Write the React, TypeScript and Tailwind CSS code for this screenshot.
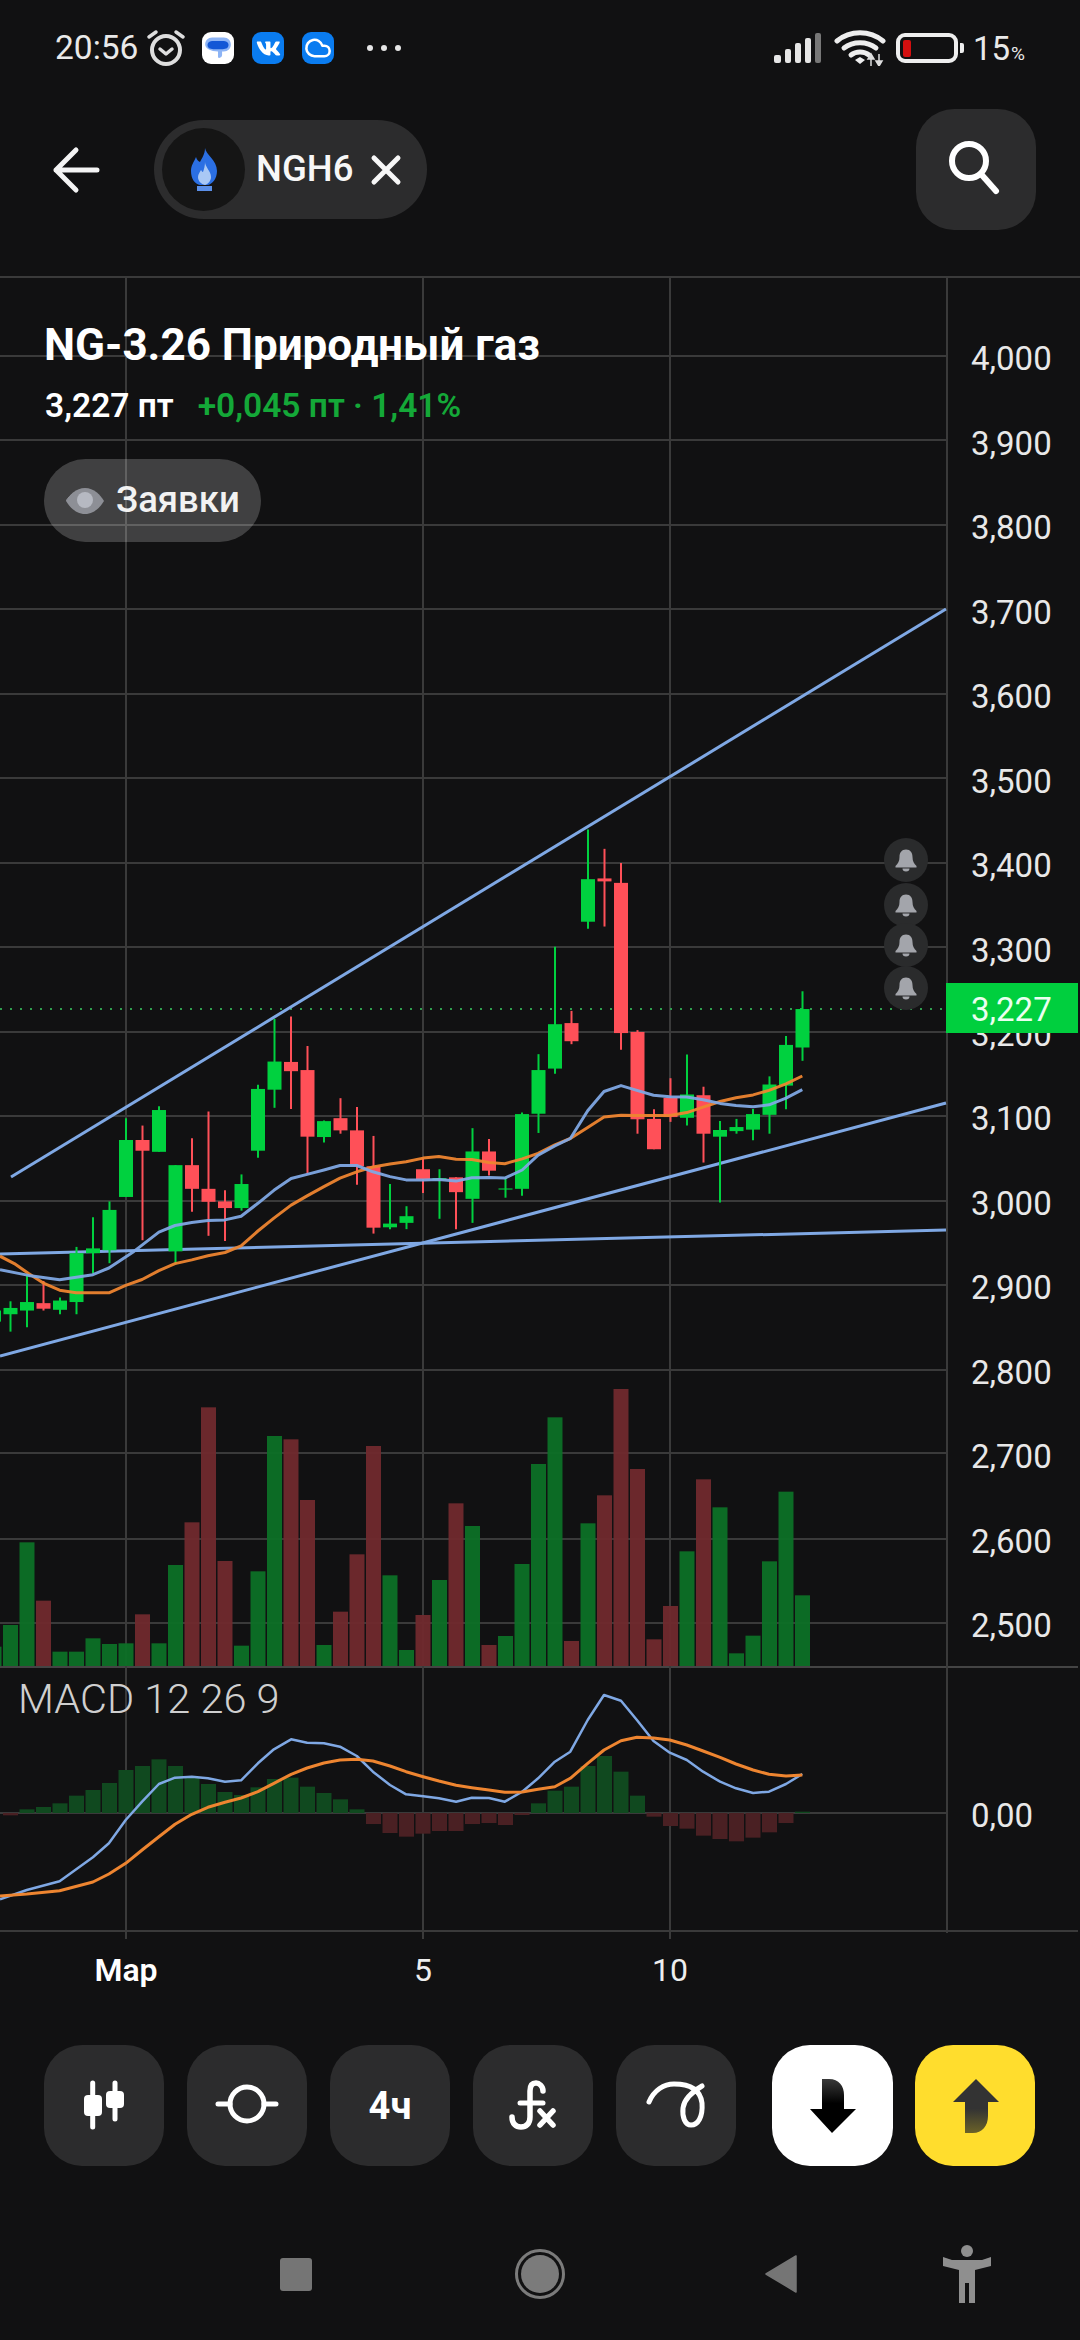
import React from "react";
import { FaVk } from "react-icons/fa";
import { Cloud } from "lucide-react";

type Candle = [number, number, number, number, "g" | "r"];
const GREEN = "#00d13f";
const RED = "#ff5058";
const LINE = "#7fa8e4";
const ORANGE = "#ee8530";
const GRID = "#3a3a3a";

const cy = (z: number) => 800 + z / 2.703;
const xAt = (i: number) => 126 + 16.5 * (i - 8);

const candles: Candle[] = [
  [1360, 1420, 1380, 1410, "g"],
  [1355, 1437, 1373, 1390, "g"],
  [1285, 1425, 1357, 1380, "g"],
  [1300, 1380, 1360, 1375, "r"],
  [1345, 1390, 1353, 1378, "g"],
  [1208, 1390, 1225, 1357, "g"],
  [1128, 1280, 1212, 1225, "g"],
  [1085, 1252, 1108, 1217, "g"],
  [860, 1073, 919, 1073, "g"],
  [880, 1190, 919, 948, "r"],
  [828, 951, 838, 951, "g"],
  [987, 1255, 987, 1220, "g"],
  [914, 1113, 987, 1051, "r"],
  [842, 1178, 1051, 1086, "r"],
  [1055, 1192, 1085, 1103, "r"],
  [1012, 1110, 1038, 1103, "g"],
  [770, 967, 781, 948, "g"],
  [592, 832, 707, 783, "g"],
  [585, 835, 708, 733, "r"],
  [665, 1010, 730, 910, "r"],
  [866, 926, 868, 911, "g"],
  [806, 902, 860, 893, "r"],
  [830, 1040, 893, 990, "r"],
  [908, 1172, 990, 1156, "r"],
  [1038, 1160, 1145, 1155, "g"],
  [1098, 1160, 1125, 1143, "g"],
  [968, 1062, 998, 1025, "r"],
  [998, 1132, 1022, 1027, "g"],
  [1020, 1160, 1020, 1060, "r"],
  [887, 1143, 950, 1078, "g"],
  [916, 1015, 950, 1002, "r"],
  [1022, 1075, 1050, 1053, "g"],
  [845, 1070, 849, 1051, "g"],
  [687, 900, 730, 848, "g"],
  [397, 740, 606, 726, "g"],
  [570, 660, 603, 652, "r"],
  [80, 348, 214, 329, "g"],
  [132, 342, 212, 220, "r"],
  [170, 675, 224, 630, "r"],
  [622, 902, 627, 863, "r"],
  [836, 944, 862, 944, "r"],
  [752, 870, 805, 857, "r"],
  [688, 880, 796, 859, "g"],
  [775, 980, 798, 902, "r"],
  [868, 1088, 892, 910, "g"],
  [862, 902, 884, 895, "g"],
  [835, 920, 849, 891, "g"],
  [747, 902, 769, 851, "g"],
  [638, 836, 662, 772, "g"],
  [517, 705, 565, 669, "g"],
];

const volumes: [number, "g" | "r"][] = [
  [800, "g"], [735, "g"], [487, "g"], [662, "r"], [815, "g"], [815, "g"], [775, "g"], [792, "g"], [790, "g"], [703, "r"],
  [790, "g"], [555, "g"], [427, "r"], [82, "r"], [543, "r"], [797, "g"], [574, "g"], [168, "g"], [178, "r"], [360, "r"],
  [795, "g"], [695, "r"], [523, "r"], [198, "r"], [586, "g"], [810, "g"], [705, "r"], [600, "g"], [370, "r"], [438, "g"],
  [795, "r"], [768, "g"], [552, "g"], [252, "g"], [112, "g"], [783, "r"], [430, "g"], [346, "r"], [27, "r"], [267, "r"],
  [778, "r"], [678, "r"], [514, "g"], [298, "r"], [382, "g"], [820, "g"], [767, "g"], [544, "g"], [335, "g"], [646, "g"],
];

const hist: [number, "g" | "r"][] = [
  [436, "r"], [418, "g"], [411, "g"], [400, "g"], [377, "g"], [360, "g"], [339, "g"], [300, "g"], [288, "g"], [268, "g"],
  [288, "g"], [322, "g"], [342, "g"], [366, "g"], [375, "g"], [352, "g"], [327, "g"], [323, "g"], [350, "g"], [369, "g"],
  [388, "g"], [418, "g"], [462, "r"], [489, "r"], [500, "r"], [491, "r"], [483, "r"], [483, "r"], [462, "r"], [459, "r"],
  [465, "r"], [435, "r"], [400, "g"], [362, "g"], [350, "g"], [288, "g"], [258, "g"], [305, "g"], [377, "g"], [440, "r"],
  [468, "r"], [476, "r"], [497, "r"], [507, "r"], [514, "r"], [503, "r"], [487, "r"], [459, "r"], [425, "g"],
];

const left = (a: number[][], fy: (y: number) => number) => a.map(([x, y]) => `${(x / 2.8).toFixed(1)},${fy(y).toFixed(1)}`);
const right = (a: number[][], fy: (y: number) => number) => a.map(([x, y]) => `${(500 + x / 2.703).toFixed(1)},${fy(y).toFixed(1)}`);
const my = (z: number) => 1670 + z / 3;

const maBlue = [
  ...left([[0,1270],[80,1285],[167,1297],[260,1283],[305,1265],[375,1220],[445,1168],[490,1150],[537,1142],[582,1137],[630,1135],[675,1125],[722,1090],[767,1055],[815,1023],[860,1012],[907,1000],[952,988],[999,988],[1044,1005],[1092,1018],[1137,1027],[1185,1027],[1229,1026],[1277,1030],[1321,1021],[1369,1020]], cy),
  ...right([[13,1022],[60,1000],[103,960],[148,935],[190,915],[237,840],[281,788],[327,772],[370,785],[415,798],[459,802],[505,803],[549,810],[595,820],[638,826],[684,829],[727,824],[773,806],[817,783]], cy),
].join(" ");
const maOrange = [
  ...left([[0,1233],[40,1253],[80,1280],[120,1305],[167,1325],[213,1332],[260,1332],[305,1332],[352,1312],[398,1296],[445,1272],[490,1253],[537,1243],[582,1232],[630,1223],[675,1205],[722,1165],[767,1130],[815,1095],[860,1070],[907,1045],[952,1022],[999,1005],[1044,992],[1092,984],[1137,978],[1185,968],[1229,964],[1277,971],[1321,972],[1369,980]], cy),
  ...right([[13,983],[60,970],[103,955],[148,932],[190,915],[237,885],[281,857],[327,852],[370,853],[415,853],[459,853],[505,845],[549,830],[595,815],[638,805],[684,797],[727,785],[773,767],[817,746]], cy),
].join(" ");
const macdBlue = [
  ...left([[0,688],[75,660],[167,634],[260,562],[305,520],[352,450],[398,395],[445,342],[490,323],[537,320],[582,325],[630,335],[675,331],[722,280],[767,238],[815,208],[860,218],[907,220],[952,230],[999,258],[1044,305],[1092,345],[1137,373],[1185,379],[1229,385],[1277,395],[1321,383],[1369,384]], my),
  ...right([[13,395],[60,365],[103,325],[148,275],[190,245],[237,150],[281,75],[327,92],[370,150],[415,213],[459,248],[505,270],[549,305],[595,335],[638,355],[684,369],[727,365],[773,342],[817,312]], my),
].join(" ");
const macdOrange = [
  ...left([[0,678],[75,672],[167,662],[260,636],[305,612],[352,580],[398,540],[445,500],[490,463],[537,433],[582,412],[630,397],[675,384],[722,365],[767,340],[815,313],[860,294],[907,279],[952,270],[999,268],[1044,273],[1092,288],[1137,305],[1185,320],[1229,333],[1277,346],[1321,353],[1369,360]], my),
  ...right([[13,367],[60,366],[103,358],[148,350],[190,325],[237,280],[281,240],[327,212],[370,202],[415,204],[459,210],[505,225],[549,243],[595,262],[638,282],[684,300],[727,313],[773,318],[817,315]], my),
].join(" ");

const gridYs = [277, 356, 440, 525, 609, 694, 778, 863, 947, 1032, 1116, 1201, 1285, 1370, 1453, 1539, 1623];
const labels = ["4,000","3,900","3,800","3,700","3,600","3,500","3,400","3,300","3,200","3,100","3,000","2,900","2,800","2,700","2,600","2,500"];

function Chart() {
  return (
    <svg className="absolute inset-0" width={1080} height={1760} viewBox="0 240 1080 1760">
      {gridYs.map((y) => (
        <line key={y} x1={0} x2={y === 277 ? 1080 : 947} y1={y} y2={y} stroke={GRID} strokeWidth={2} />
      ))}
      <line x1={0} x2={1078} y1={1667} y2={1667} stroke="#444" strokeWidth={2} />
      <line x1={0} x2={947} y1={1813} y2={1813} stroke={GRID} strokeWidth={2} />
      <line x1={0} x2={1078} y1={1931} y2={1931} stroke={GRID} strokeWidth={2} />
      {[126, 423, 670].map((x) => (
        <line key={x} x1={x} x2={x} y1={277} y2={1939} stroke={GRID} strokeWidth={2} />
      ))}
      <line x1={947} x2={947} y1={277} y2={1933} stroke={GRID} strokeWidth={2} />

      {volumes.map(([t, c], i) => {
        const top = 1380 + t / 3;
        return <rect key={i} x={xAt(i) - 7.5} y={top} width={15} height={1666 - top} fill={c === "g" ? "#0c6f26" : "#6f2a2e"} fillOpacity={0.96} />;
      })}

      {hist.map(([t, c], i) => {
        const v = 1670 + t / 3;
        const y = Math.min(v, 1813);
        return <rect key={i} x={xAt(i + 1) - 7.5} y={y} width={15} height={Math.abs(v - 1813)} fill={c === "g" ? "#10491f" : "#4a2023"} />;
      })}

      <line x1={0} x2={946} y1={1009} y2={1009} stroke="#2f9e4f" strokeWidth={2} strokeDasharray="2 8" />

      <line x1={11} y1={1177} x2={946} y2={609} stroke={LINE} strokeWidth={3} />
      <line x1={0} y1={1356} x2={946} y2={1103} stroke={LINE} strokeWidth={3} />
      <line x1={0} y1={1254} x2={946} y2={1230} stroke={LINE} strokeWidth={3} />

      {candles.map(([wt, wb, bt, bb, c], i) => {
        const x = xAt(i);
        const col = c === "g" ? GREEN : RED;
        return (
          <g key={i}>
            <line x1={x} x2={x} y1={cy(wt)} y2={cy(wb)} stroke={col} strokeWidth={2} />
            <rect x={x - 7} y={cy(bt)} width={14} height={cy(bb) - cy(bt)} fill={col} />
          </g>
        );
      })}

      <polyline points={maOrange} fill="none" stroke={ORANGE} strokeWidth={3} strokeLinejoin="round" strokeOpacity={0.95} />
      <polyline points={maBlue} fill="none" stroke={LINE} strokeWidth={3} strokeLinejoin="round" strokeOpacity={0.95} />
      <polyline points={macdBlue} fill="none" stroke={LINE} strokeWidth={2.5} strokeLinejoin="round" />
      <polyline points={macdOrange} fill="none" stroke={ORANGE} strokeWidth={3} strokeLinejoin="round" />
    </svg>
  );
}

function Bell({ top }: { top: number }) {
  return (
    <div className="absolute left-[884px] w-11 h-11 rounded-full bg-[#2a2b2c] flex items-center justify-center" style={{ top }}>
      <svg width={24} height={24} viewBox="0 0 24 24">
        <path d="M12 1.5c-4.4 0-6.5 3.4-6.5 7.5 0 4.3-1.6 7-4 9v1.5h21V18c-2.4-2-4-4.7-4-9 0-4.100-2.100-7.500-6.500-7.500z" fill="#a3a5ab" />
        <path d="M8.500 20.500a3.500 3 0 0 0 7 0z" fill="#a3a5ab" />
      </svg>
    </div>
  );
}

function StatusBar() {
  return (
    <div className="h-[100px] flex items-center pl-[55px] pr-[55px] pb-[4px] text-[#e9e9e9]">
      <span className="text-[33.5px] leading-none w-[90px]">20:56</span>
      <svg width={40} height={40} viewBox="0 0 40 40" className="ml-[1px]">
        <circle cx={20} cy={22} r={14} fill="none" stroke="#dedede" strokeWidth={4} />
        <path d="M14 21l6 5 6-5" fill="none" stroke="#dedede" strokeWidth={3.500} strokeLinecap="round" strokeLinejoin="round" />
        <path d="M3 9l7-5M37 9l-7-5" stroke="#dedede" strokeWidth={3.500} strokeLinecap="round" />
      </svg>
      <div className="ml-[16px] w-8 h-8 rounded-[9px] bg-white flex items-center justify-center">
        <svg width={28} height={28} viewBox="0 0 24 24">
          <path d="M7 3h10c3.500 0 6 2.500 6 6s-2.500 6-6 6h-1.500v3c0 1-1 2.500-2.500 2.500-.7 0-1-.3-1-.5v-5C6 15 1 12.500 1 9c0-3.500 2.500-6 6-6z" fill="#8db4f5" />
          <path d="M8 6h8c3 0 5 1 5 3.500S19 13 16 13H8c-3 0-5-1-5-3.500S5 6 8 6z" fill="#1257d6" />
        </svg>
      </div>
      <div className="ml-[18px] w-8 h-8 rounded-[9px] bg-[#0a7cf0] flex items-center justify-center">
        <FaVk size={25} color="#fff" />
      </div>
      <div className="ml-[18px] w-8 h-8 rounded-[9px] bg-[#0a7cf0] flex items-center justify-center">
        <Cloud size={28} color="#fff" strokeWidth={2.200} />
      </div>
      <div className="ml-[33px] flex gap-[8px]">
        <div className="w-[6px] h-[6px] rounded-full bg-[#e6e6e6]" />
        <div className="w-[6px] h-[6px] rounded-full bg-[#e6e6e6]" />
        <div className="w-[6px] h-[6px] rounded-full bg-[#e6e6e6]" />
      </div>
      <div className="ml-auto flex items-center">
        <svg width={50} height={32} viewBox="0 0 50 32">
          <rect x={1} y={23} width={7} height={8} rx={2} fill="#e6e6e6" />
          <rect x={12} y={17} width={6} height={14} rx={2} fill="#e6e6e6" />
          <rect x={22} y={11} width={6} height={20} rx={2} fill="#e6e6e6" />
          <rect x={32} y={6} width={6} height={25} rx={2} fill="#e6e6e6" />
          <rect x={42} y={1} width={6} height={30} rx={2} fill="#777" />
        </svg>
        <svg width={52} height={36} viewBox="0 0 52 36" className="ml-[11px]">
          <path d="M3 11c13-11 33-11 46 0" fill="none" stroke="#eee" strokeWidth={5} strokeLinecap="round" />
          <path d="M10 18c9-7 23-7 32 0" fill="none" stroke="#eee" strokeWidth={5} strokeLinecap="round" />
          <path d="M17 25c5-4 13-4 18 0" fill="none" stroke="#eee" strokeWidth={5} strokeLinecap="round" />
          <path d="M21 30l5-3 5 3-5 4z" fill="#eee" />
          <path d="M37 36v-9M37 24l-3 5h6zM45 24v9M45 36l-3-5h6z" stroke="#ddd" strokeWidth={1.500} fill="#ddd" />
        </svg>
        <div className="ml-[10px] w-[62px] h-[30px] rounded-[9px] border-4 border-[#eeeeee] p-[3px]">
          <div className="w-[8px] h-[17px] rounded-[2px] bg-[#d40f0f]" />
        </div>
        <div className="ml-[2px] w-[4px] h-[10px] rounded-r-[2px] bg-[#eeeeee]" />
        <span className="ml-[9px] text-[33px] leading-none">15</span>
        <span className="ml-[1px] text-[19px] leading-none self-end mb-[3px]">%</span>
      </div>
    </div>
  );
}

function Header() {
  return (
    <div className="h-[140px] flex items-center pb-[1px]">
      <svg width={50} height={50} viewBox="0 0 50 50" className="ml-[52px]">
        <path d="M45 25H4M24 5L4 25l20 20" fill="none" stroke="#f4f4f4" strokeWidth={5} strokeLinecap="round" strokeLinejoin="round" />
      </svg>
      <div className="ml-[52px] h-[99px] w-[273px] rounded-full bg-[#2c2c2d] flex items-center pl-[8px]">
        <div className="w-[83px] h-[83px] rounded-full bg-[#151515] flex items-center justify-center">
          <svg width={32} height={44} viewBox="0 0 30 44">
            <path d="M16 0c1 7 12 12 12 23 0 8-5 13-9 14h-8C6 36 2 31 2 23c0-6 3-9 5-14 1 3 2 4 4 5 2-4 5-8 5-14z" fill="#2b6fe3" />
            <path d="M16 14c0 5 6 9 6 15 0 4-3 7-6 8-4-1-7-4-7-8 0-3 2-5 3-7 1 1 1 2 2 2 1-3 2-6 2-10z" fill="#a9c8f5" />
            <rect x={8} y={38} width={15} height={5} fill="#5b8fe8" />
          </svg>
        </div>
        <span className="ml-[11px] text-[36.5px] font-medium leading-none text-[#f7f7f7]">NGH6</span>
        <svg width={32} height={32} viewBox="0 0 32 32" className="ml-[17px]">
          <path d="M4 4l24 24M28 4L4 28" stroke="#f7f7f7" strokeWidth={5} strokeLinecap="round" />
        </svg>
      </div>
      <div className="ml-auto mr-[44px] w-[120px] h-[121px] rounded-[38px] bg-[#2c2c2d] flex items-center justify-center">
        <svg width={120} height={121} viewBox="0 0 120 121">
          <circle cx={53} cy={52} r={17} fill="none" stroke="#fff" strokeWidth={6} />
          <path d="M65 65l15 17" stroke="#fff" strokeWidth={6} strokeLinecap="round" />
        </svg>
      </div>
    </div>
  );
}

function ToolButton({ children }: { children: React.ReactNode }) {
  return <div className="w-[120px] h-[121px] rounded-[38px] bg-[#2c2c2d] flex items-center justify-center">{children}</div>;
}

function Toolbar() {
  const S = { width: 120, height: 121, viewBox: "0 0 120 121" };
  return (
    <div className="flex pl-[44px] pt-[45px]">
      <div className="flex gap-[23px]">
        <ToolButton>
          <svg {...S}>
            <path d="M48.700 38v44M71 38v36" stroke="#fff" strokeWidth={5} strokeLinecap="round" />
            <rect x={40} y={50} width={18} height={21} rx={4} fill="#fff" />
            <rect x={62} y={46} width={18} height={17} rx={4} fill="#fff" />
          </svg>
        </ToolButton>
        <ToolButton>
          <svg {...S}>
            <circle cx={60} cy={59} r={17} fill="none" stroke="#fff" strokeWidth={5} />
            <path d="M31 59h12M77 59h12" stroke="#fff" strokeWidth={5} strokeLinecap="round" />
          </svg>
        </ToolButton>
        <ToolButton>
          <span className="text-[38px] font-bold leading-none text-white">4ч</span>
        </ToolButton>
        <ToolButton>
          <svg {...S}>
            <path d="M70 46c0-5-4-8-7-8-4 0-6 3-6 8v26c0 7-4 10-9 10s-9-3-9-10" fill="none" stroke="#fff" strokeWidth={5.500} strokeLinecap="round" />
            <path d="M47 58h23" stroke="#fff" strokeWidth={5} strokeLinecap="round" />
            <path d="M67 66l13 14M80 66L67 80" stroke="#fff" strokeWidth={5.500} strokeLinecap="round" />
          </svg>
        </ToolButton>
        <ToolButton>
          <svg {...S}>
            <path d="M33 57C38 45 48 39 58 39c12 0 26 3 28 19 1 14-4 22-11 22-6 0-9-8-8-17 1-9 9-16 19-22" fill="none" stroke="#fff" strokeWidth={5} strokeLinecap="round" />
          </svg>
        </ToolButton>
      </div>
      <div className="ml-[36px] w-[121px] h-[121px] rounded-[38px] bg-white">
        <svg {...S}>
          <defs>
            <linearGradient id="dn" x1="0" y1="0" x2="0" y2="1">
              <stop offset="0" stopColor="#3a3a3a" />
              <stop offset="0.45" stopColor="#000" />
            </linearGradient>
          </defs>
          <path d="M50 34h7c10 0 15 7 15 16v14h12L60 88 38 64h12z" fill="url(#dn)" />
        </svg>
      </div>
      <div className="ml-[22px] w-[120px] h-[121px] rounded-[38px] bg-[#ffdd2d]">
        <svg {...S}>
          <defs>
            <linearGradient id="up" x1="0" y1="0" x2="0" y2="1">
              <stop offset="0.55" stopColor="#333333" />
              <stop offset="1" stopColor="#6b6228" />
            </linearGradient>
          </defs>
          <path d="M61 34l23 23H73v14c0 10-6 17-15 17h-8V57H38z" fill="url(#up)" />
        </svg>
      </div>
    </div>
  );
}

function NavBar() {
  return (
    <div className="flex items-center pl-[280px] mt-[78px] h-[60px]">
      <div className="w-8 h-[33px] rounded-[3px] bg-[#757575]" />
      <div className="ml-[203px] w-[50px] h-[50px] rounded-full border-[3px] border-[#7b7b7b] p-[3px]">
        <div className="w-full h-full rounded-full bg-[#7b7b7b]" />
      </div>
      <svg width={34} height={38} viewBox="0 0 34 38" className="ml-[199px]">
        <path d="M32 1v36L2 19z" fill="#757575" stroke="#757575" strokeWidth={1.500} strokeLinejoin="round" />
      </svg>
      <svg width={50} height={58} viewBox="0 0 50 58" className="ml-[144px]">
        <circle cx={25} cy={6} r={6} fill="#8f8f8f" />
        <path d="M1 12l9 3h30l9-3v9l-16 4v33h-6V38h-4v20h-6V25L1 21z" fill="#8f8f8f" />
      </svg>
    </div>
  );
}

export default function App() {
  return (
    <div className="w-[1080px] h-[2340px] overflow-hidden bg-[#111112] font-['Roboto',sans-serif] text-white">
      <StatusBar />
      <Header />
      <div className="relative h-[1760px]">
        <Chart />
        <div className="absolute left-[44px] top-[81px] text-[44px] font-bold leading-[48px] whitespace-nowrap">NG-3.26 Природный газ</div>
        <div className="absolute left-[45px] top-[146px] flex items-baseline text-[33.5px] font-semibold leading-[40px] whitespace-nowrap">
          <span>3,227 пт</span>
          <span className="ml-[24px] text-[#14a838]">+0,045 пт · 1,41%</span>
        </div>
        <div className="absolute left-[44px] top-[219px] h-[83px] w-[217px] rounded-full bg-white/20 flex items-center pl-[22px]">
          <svg width={38} height={28} viewBox="0 0 38 28">
            <path fillRule="evenodd" d="M19 1C10 1 3.500 8 0 14c3.500 6 10 13 19 13s15.500-7 19-13C34.500 8 28 1 19 1z" fill="#8d8f96" />
            <circle cx={19} cy={13} r={8} fill="#b6b9c2" />
            <path d="M0 14c3.500-6 10-11 19-11" fill="none" stroke="#8d8f96" strokeWidth={1} />
          </svg>
          <span className="ml-[12px] text-[36.5px] font-medium leading-none text-[#f2f2f2]">Заявки</span>
        </div>

        <div className="absolute left-[971px] top-[76.500px] flex flex-col text-[33px] text-[#e8e8e8]">
          {labels.map((l) => (
            <div key={l} className="h-[84.470px] flex items-center leading-none">{l}</div>
          ))}
        </div>
        <div className="absolute left-[971px] top-[1554.500px] h-[42px] flex items-center text-[33px] leading-none text-[#e8e8e8]">0,00</div>

        <Bell top={598} />
        <Bell top={643} />
        <Bell top={683} />
        <Bell top={726} />

        <div className="absolute left-[946px] top-[743px] w-[132px] h-[50px] bg-[#00cf3e] flex items-center pl-[25px] pt-[3px] text-[33px] leading-none text-[#eafff0]">3,227</div>

        <div className="absolute left-[126px] top-[1711px] -translate-x-1/2 text-[32px] font-semibold leading-[38px]">Мар</div>
        <div className="absolute left-[423px] top-[1711px] -translate-x-1/2 text-[32px] leading-[38px] text-[#eeeeee]">5</div>
        <div className="absolute left-[670px] top-[1711px] -translate-x-1/2 text-[32px] leading-[38px] text-[#eeeeee]">10</div>
        <div className="absolute left-[18px] top-[1434px] text-[41.500px] font-light leading-[50px] text-[#cfcfcf] whitespace-nowrap">MACD 12 26 9</div>
      </div>
      <Toolbar />
      <NavBar />
    </div>
  );
}
